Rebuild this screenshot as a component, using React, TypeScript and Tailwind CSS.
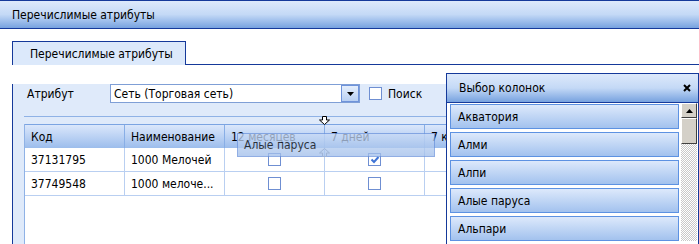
import React from 'react';

const navy = 'border-[#15399a]';

const columns = ['Код', 'Наименование', '12 месяцев', '7 дней', '7 кол'];

const rows = [
  { code: '37131795', name: '1000 Мелочей', m12: false, d7: true },
  { code: '37749548', name: '1000 мелоче...', m12: false, d7: false },
];

const pickList = ['Акватория', 'Алми', 'Алпи', 'Алые паруса', 'Альпари'];

const Box: React.FC<{ checked?: boolean }> = ({ checked }) => (
  <span className="relative inline-block w-[13px] h-[13px] border border-[#6f8fd2] bg-white">
    {checked && (
      <svg className="absolute left-[1px] top-[1px]" width="10" height="10" viewBox="0 0 10 10">
        <path d="M1.5 4.5 L4 7 L8.5 2" fill="none" stroke="#3f74d6" strokeWidth="2" />
      </svg>
    )}
  </span>
);

export default function App() {
  return (
    <div
      className="relative w-[699px] h-[244px] overflow-hidden bg-white text-[12px] text-black"
      style={{ fontFamily: '"DejaVu Sans Condensed", "DejaVu Sans", sans-serif', fontStretch: 'condensed' }}
    >
      {/* Window title */}
      <div className={`h-[29px] border-t border-b ${navy} bg-gradient-to-b from-[#dde9fb] via-[#c4d9f6] to-[#77a2df] flex items-center pl-[12px]`}>
        Перечислимые атрибуты
      </div>

      <div className="pl-[12px] pt-[12px]">
        {/* Tabs */}
        <div className="flex h-[24px]">
          <div className={`w-[174px] border-t border-l border-r ${navy} bg-[#dce9fb] flex items-center pl-[17px]`}>
            Перечислимые атрибуты
          </div>
          <div className={`flex-1 border-b ${navy}`} />
        </div>

        {/* Panel */}
        <div className={`h-[200px] border-l ${navy} bg-[#dfeafa] pl-[11px]`}>
          <div className="flex items-center h-[19px] mt-[19px] pl-[3px]">
            <span className="w-[83px]">Атрибут</span>
            <div className="relative w-[250px] h-[19px] border border-[#7f9fd6] bg-white flex items-center pl-[3px]">
              Сеть (Торговая сеть)
              <div className="absolute right-0 top-0 w-[18px] h-[17px] border border-[#6f93da] bg-gradient-to-b from-[#e4eefc] to-[#b9d0f2] flex items-center justify-center">
                <svg width="7" height="4" viewBox="0 0 7 4">
                  <path d="M0 0 H7 L3.5 4 Z" fill="#000" />
                </svg>
              </div>
            </div>
            <div className="ml-[9px] flex items-center gap-[6px]">
              <Box />
              <span>Поиск</span>
            </div>
          </div>

          <div className="mt-[13px] h-px bg-[#8fb2e6]" />

          {/* Grid */}
          <div className="mt-[7px] h-[200px] bg-white border-l border-[#8fb2e6]">
            <div className="flex h-[24px] border-t border-[#7ba4e2] bg-gradient-to-b from-[#dbe7fb] to-[#9cbdec]">
              {columns.map((c) => (
                <div key={c} className="w-[100px] shrink-0 border-r border-[#88aee6] pl-[6px] flex items-center whitespace-nowrap overflow-hidden">
                  {c}
                </div>
              ))}
            </div>
            {rows.map((r) => (
              <div key={r.code} className="flex h-[24px] border-b border-[#b9cff1]">
                <div className="w-[100px] shrink-0 border-r border-[#b9cff1] pl-[6px] flex items-center">{r.code}</div>
                <div className="w-[100px] shrink-0 border-r border-[#b9cff1] pl-[6px] flex items-center whitespace-nowrap">{r.name}</div>
                <div className="w-[100px] shrink-0 border-r border-[#b9cff1] flex items-center justify-center">
                  <Box checked={r.m12} />
                </div>
                <div className="w-[100px] shrink-0 border-r border-[#b9cff1] flex items-center justify-center">
                  <Box checked={r.d7} />
                </div>
                <div className="w-[100px] shrink-0 border-r border-[#b9cff1]" />
              </div>
            ))}
          </div>
        </div>
      </div>

      {/* Column drag ghost and drop markers */}
      <div className="absolute left-[237px] top-[133px] w-[198px] h-[24px] border border-[#6d94dc] bg-gradient-to-b from-[#c9dbf6] to-[#9fbdea] opacity-75 flex items-center pl-[6px]">
        Алые паруса
      </div>
      <svg className="absolute left-[319px] top-[116px]" width="11" height="9" viewBox="0 0 11 9">
        <path d="M3.5 0.5 H7.5 V4 H10.5 L5.5 8.5 L0.5 4 H3.5 Z" fill="#fff" stroke="#000" />
      </svg>
      <svg className="absolute left-[319px] top-[148px]" width="11" height="9" viewBox="0 0 11 9">
        <path d="M3.5 8.5 H7.5 V5 H10.5 L5.5 0.5 L0.5 5 H3.5 Z" fill="none" stroke="#9fb4d6" />
      </svg>

      {/* Column chooser */}
      <div className={`absolute left-[446px] top-[73px] w-[253px] h-[200px] border ${navy} bg-white`}>
        <div className={`h-[29px] border-b ${navy} bg-gradient-to-b from-[#dde9fb] via-[#c4d9f6] to-[#77a2df] flex items-center justify-between pl-[12px] pr-[7px]`}>
          <span>Выбор колонок</span>
          <svg width="8" height="8" viewBox="0 0 8 8">
            <path d="M1 1 L7 7 M7 1 L1 7" stroke="#000" strokeWidth="2" />
          </svg>
        </div>
        <div className="flex">
          <div className="w-[232px] pl-[3px] flex flex-col gap-[3px] pt-[1px]">
            {pickList.map((p) => (
              <div key={p} className="h-[25px] border border-[#5d92e2] bg-gradient-to-b from-[#dde9fb] to-[#a3c2ee] flex items-center pl-[7px]">
                {p}
              </div>
            ))}
          </div>
          <div className="ml-[2px] w-[16px] flex flex-col bg-[repeating-conic-gradient(#c9c9c9_0_25%,#ffffff_0_50%)] bg-[length:2px_2px]">
            <div className="h-[15px] border border-t-white border-l-white border-r-[#404040] border-b-[#404040] bg-[#d4d0c8] flex items-center justify-center">
              <svg width="7" height="4" viewBox="0 0 7 4">
                <path d="M0 4 H7 L3.5 0 Z" fill="#000" />
              </svg>
            </div>
            <div className="h-[26px] border border-t-white border-l-white border-r-[#404040] border-b-[#404040] bg-[#d4d0c8]" />
          </div>
        </div>
      </div>
    </div>
  );
}
